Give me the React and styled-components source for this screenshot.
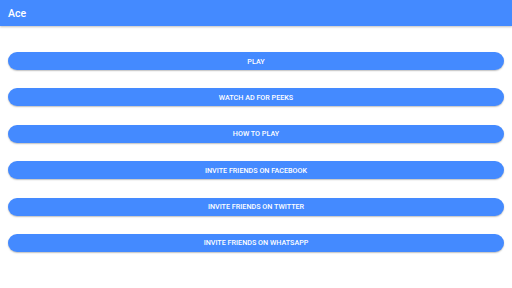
import React from 'react';
import styled, { createGlobalStyle } from 'styled-components';

const GlobalStyle = createGlobalStyle`
  html, body {
    margin: 0;
    padding: 0;
    background: #ffffff;
    font-family: Roboto, "Liberation Sans", sans-serif;
  }
`;

const Page = styled.div`
  width: 512px;
  height: 288px;
  overflow: hidden;
  background: #ffffff;
`;

const AppBar = styled.header`
  height: 26px;
  display: flex;
  align-items: center;
  padding-left: 8px;
  background: #448aff;
  box-shadow: 0 1px 2px rgba(0, 0, 0, 0.25);
`;

const Title = styled.div`
  color: #ffffff;
  font-size: 10.5px;
  font-weight: 500;
`;

const Menu = styled.div`
  display: flex;
  flex-direction: column;
  gap: 18.4px;
  padding: 26px 8px 0;
`;

const MenuButton = styled.button`
  height: 18px;
  width: 100%;
  border: none;
  border-radius: 9px;
  background: #448aff;
  color: #ffffff;
  font-family: Roboto, "Liberation Sans", sans-serif;
  font-size: 7.2px;
  font-weight: 500;
  text-transform: uppercase;
  box-shadow: 0 1px 1.5px rgba(0, 0, 0, 0.25);
  padding: 0;
  cursor: pointer;
`;

const items = [
  'Play',
  'Watch ad for peeks',
  'How to play',
  'Invite friends on Facebook',
  'Invite friends on Twitter',
  'Invite friends on WhatsApp',
];

export default function App() {
  return (
    <Page>
      <GlobalStyle />
      <AppBar>
        <Title>Ace</Title>
      </AppBar>
      <Menu>
        {items.map((label) => (
          <MenuButton key={label}>{label}</MenuButton>
        ))}
      </Menu>
    </Page>
  );
}
